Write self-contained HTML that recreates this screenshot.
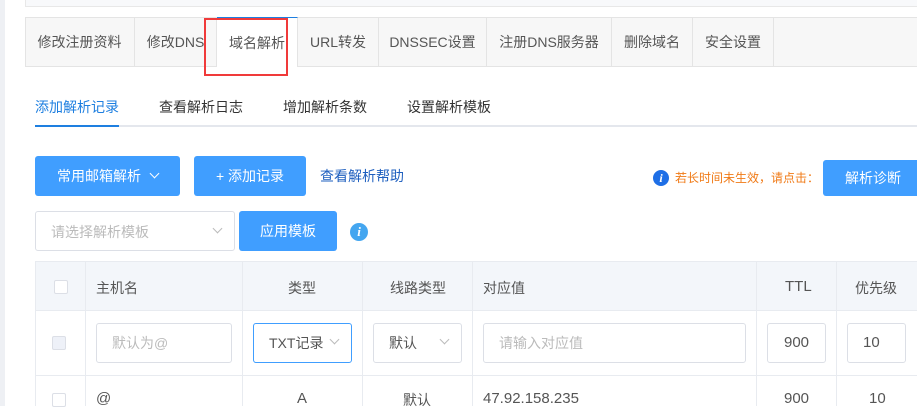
<!DOCTYPE html>
<html><head><meta charset="utf-8"><style>
*{box-sizing:border-box;margin:0;padding:0}
body{width:917px;height:406px;overflow:hidden;background:#fff;font-family:"Liberation Sans","Noto Sans CJK SC",sans-serif;font-size:14px;color:#555;position:relative}
.a{position:absolute}
.tab{position:absolute;top:17px;height:50px;line-height:50px;text-align:center;border-right:1px solid #e4e4e4;color:#555;font-size:14px}
.btn{position:absolute;background:#409eff;color:#fff;border-radius:3px;text-align:center;font-size:14px}
.inp{position:absolute;border:1px solid #dcdfe6;border-radius:3px;background:#fff}
.chev{position:absolute;width:7px;height:7px;border-right:1px solid #bbb;border-bottom:1px solid #bbb;transform:rotate(45deg)}
.vl{position:absolute;width:1px;background:#e8ebf0}
.hl{position:absolute;height:1px;background:#e8ebf0;left:35px;right:0}
.cb{position:absolute;width:14px;height:14px;border:1px solid #dcdfe6;border-radius:2px;background:#fff}
</style></head><body>
<div class="a" style="left:0;top:0;width:5px;height:406px;background:#eef0f4"></div>
<div class="a" style="left:25px;top:0;right:0;height:7px;background:#f8f9fb;border-bottom:1px solid #e8e8e8;border-left:1px solid #e8e8e8"></div>
<div class="a" style="left:25px;top:17px;right:0;height:50px;background:#f7f7f7;border:1px solid #e4e4e4;border-right:none"></div>
<div class="tab" style="left:25px;width:110px">修改注册资料</div>
<div class="tab" style="left:135px;width:82px">修改DNS</div>
<div class="tab" style="left:217px;width:81px;background:#fff;height:50px;border-top:1px solid #1e7fe0;color:#555">域名解析</div>
<div class="tab" style="left:298px;width:81px">URL转发</div>
<div class="tab" style="left:379px;width:108px">DNSSEC设置</div>
<div class="tab" style="left:487px;width:125px">注册DNS服务器</div>
<div class="tab" style="left:612px;width:81px">删除域名</div>
<div class="tab" style="left:693px;width:81px">安全设置</div>
<div class="a" style="left:204px;top:18px;width:84px;height:58px;border:2px solid #f03a3a"></div>

<div class="a" style="left:35px;top:125px;right:0;height:2px;background:#e4e7ed"></div>
<div class="a" style="left:35px;top:125px;width:84px;height:2px;background:#1e7fe0"></div>
<div class="a" style="left:35px;top:97px;color:#1e7fe0">添加解析记录</div>
<div class="a" style="left:159px;top:97px;color:#333">查看解析日志</div>
<div class="a" style="left:283px;top:97px;color:#333">增加解析条数</div>
<div class="a" style="left:407px;top:97px;color:#333">设置解析模板</div>

<div class="btn" style="left:35px;top:156px;width:145px;height:40px;line-height:40px">常用邮箱解析 <span style="display:inline-block;width:7px;height:7px;border-right:1px solid #fff;border-bottom:1px solid #fff;transform:rotate(45deg);margin:0 0 4px 6px"></span></div>
<div class="btn" style="left:194px;top:156px;width:112px;height:40px;line-height:40px">+ 添加记录</div>
<div class="a" style="left:320px;top:166px;color:#1e5fbf;font-size:14px">查看解析帮助</div>
<div class="a" style="left:653px;top:170px;width:16px;height:16px;border-radius:50%;background:#1e6fe6;color:#fff;font:italic bold 12px/16px 'Liberation Serif',serif;text-align:center">i</div>
<div class="a" style="left:675px;top:169px;color:#f07a16;font-size:12px">若长时间未生效，请点击：</div>
<div class="btn" style="left:823px;top:160px;width:100px;height:36px;line-height:36px">解析诊断</div>

<div class="inp" style="left:35px;top:211px;width:200px;height:40px"></div>
<div class="a" style="left:51px;top:222px;color:#bbb">请选择解析模板</div>
<div class="chev" style="left:214px;top:225px"></div>
<div class="btn" style="left:239px;top:211px;width:98px;height:40px;line-height:40px">应用模板</div>
<div class="a" style="left:350px;top:223px;width:18px;height:18px;border-radius:50%;background:#44a6f0;color:#fff;font:italic bold 13px/18px 'Liberation Serif',serif;text-align:center">i</div>

<div class="a" style="left:35px;top:261px;right:0;height:50px;background:#f3f6fa"></div>
<div class="hl" style="top:261px"></div><div class="hl" style="top:310px"></div><div class="hl" style="top:375px"></div>
<div class="vl" style="left:35px;top:261px;height:145px"></div>
<div class="vl" style="left:85px;top:261px;height:145px"></div>
<div class="vl" style="left:242px;top:261px;height:145px"></div>
<div class="vl" style="left:362px;top:261px;height:145px"></div>
<div class="vl" style="left:472px;top:261px;height:145px"></div>
<div class="vl" style="left:756px;top:261px;height:145px"></div>
<div class="vl" style="left:836px;top:261px;height:145px"></div>
<div class="cb" style="left:54px;top:280px"></div>
<div class="a" style="left:96px;top:278px">主机名</div>
<div class="a" style="left:288px;top:278px">类型</div>
<div class="a" style="left:390px;top:278px">线路类型</div>
<div class="a" style="left:483px;top:278px">对应值</div>
<div class="a" style="left:785px;top:278px;font-size:15px">TTL</div>
<div class="a" style="left:855px;top:278px">优先级</div>

<div class="cb" style="left:52px;top:336px;background:#eef1f8"></div>
<div class="inp" style="left:96px;top:323px;width:136px;height:40px"></div>
<div class="a" style="left:112px;top:333px;color:#bbb">默认为@</div>
<div class="inp" style="left:253px;top:323px;width:99px;height:40px;border-color:#409eff"></div>
<div class="a" style="left:269px;top:333px;color:#555">TXT记录</div>
<div class="chev" style="left:331px;top:336px"></div>
<div class="inp" style="left:373px;top:323px;width:89px;height:40px"></div>
<div class="a" style="left:389px;top:333px">默认</div>
<div class="chev" style="left:441px;top:336px"></div>
<div class="inp" style="left:483px;top:323px;width:263px;height:40px"></div>
<div class="a" style="left:499px;top:333px;color:#bbb">请输入对应值</div>
<div class="inp" style="left:767px;top:323px;width:59px;height:40px;text-align:center;line-height:38px;font-size:15px">900</div>
<div class="inp" style="left:847px;top:323px;width:59px;height:40px;line-height:38px;padding-left:15px;font-size:15px">10</div>

<div class="cb" style="left:52px;top:393px"></div>
<div class="a" style="left:96px;top:390px;font-size:15px">@</div>
<div class="a" style="left:297px;top:390px;font-size:15px">A</div>
<div class="a" style="left:403px;top:390px">默认</div>
<div class="a" style="left:483px;top:390px;font-size:15px">47.92.158.235</div>
<div class="a" style="left:784px;top:390px;font-size:15px">900</div>
<div class="a" style="left:869px;top:390px;font-size:15px">10</div>
</body></html>
